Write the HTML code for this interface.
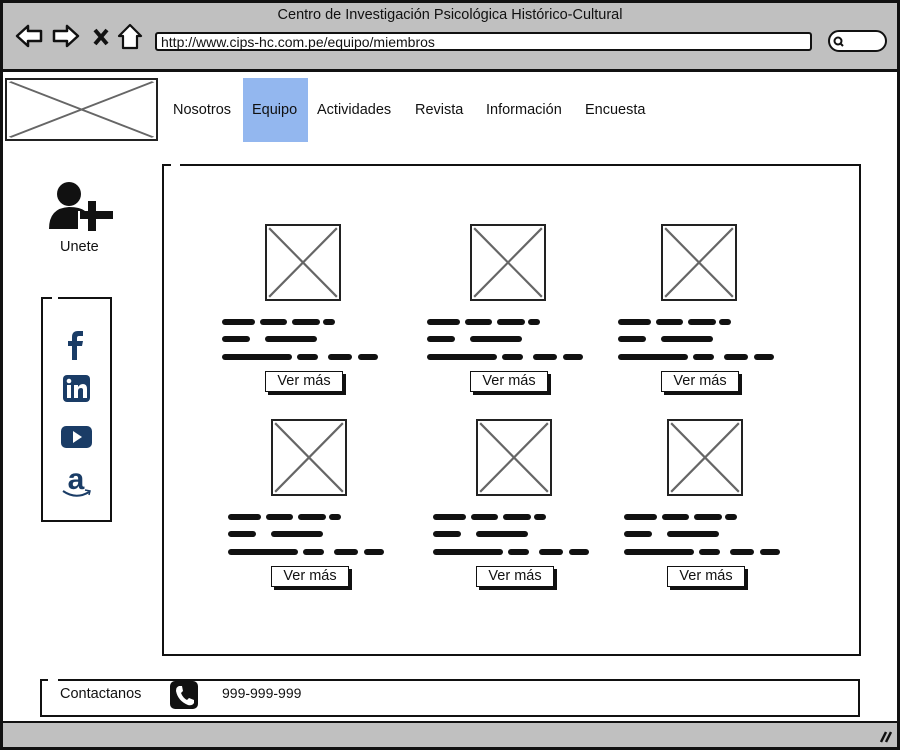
<!DOCTYPE html>
<html><head><meta charset="utf-8"><style>
*{box-sizing:border-box;margin:0;padding:0}
body{width:900px;height:750px;position:relative;background:#fff;font-family:"Liberation Sans",sans-serif;overflow:hidden;color:#000}
.a{position:absolute}
.ph{position:absolute;border:2px solid #222;background:#fff}
.ph svg{position:absolute;left:0;top:0;width:100%;height:100%}
.sq{position:absolute;height:6px;background:#111;border-radius:3px}
.btn{position:absolute;width:78px;height:21px;border:1.5px solid #111;background:#fff;box-shadow:3px 3px 0 #111;font-size:14.5px;text-align:center;line-height:18px;color:#111}
.nav{position:absolute;top:102px;font-size:14.5px;color:#111}
</style></head><body>
<div class="a" style="left:0;top:0;width:900px;height:750px;border:3px solid #111"></div>
<div class="a" style="left:3px;top:3px;width:894px;height:69px;background:#c0c0c0;border-bottom:3px solid #111"></div>
<div class="a" style="left:0;top:7px;width:900px;text-align:center;font-size:14.5px;color:#111">Centro de Investigación Psicológica Histórico-Cultural</div>
<svg class="a" style="left:14px;top:22px" width="130" height="30" viewBox="0 0 130 30">
<path d="M3 14 L14 4 L14 9 L27 9 L27 19 L14 19 L14 24 Z" fill="#fff" stroke="#111" stroke-width="2.5" stroke-linejoin="round"/>
<path d="M64 14 L53 4 L53 9 L40 9 L40 19 L53 19 L53 24 Z" fill="#fff" stroke="#111" stroke-width="2.5" stroke-linejoin="round"/>
<path d="M81 8 L93 22 M93 8 L81 22" stroke="#111" stroke-width="4"/>
<path d="M105 14 L116 3 L127 14 L123 14 L123 26 L109 26 L109 14 Z" fill="#fff" stroke="#111" stroke-width="2.2" stroke-linejoin="round"/>
</svg>
<div class="a" style="left:155px;top:32px;width:657px;height:19px;background:#fff;border:2px solid #111;border-radius:3px;font-size:14px;line-height:17px;padding-left:4px;color:#111">http://www.cips-hc.com.pe/equipo/miembros</div>
<div class="a" style="left:828px;top:30px;width:59px;height:22px;background:#fff;border:2px solid #111;border-radius:11px"></div>
<svg class="a" style="left:833px;top:36px" width="12" height="12"><circle cx="5" cy="5" r="3.5" fill="none" stroke="#111" stroke-width="2"/><path d="M7.5 7.5 L10 10" stroke="#111" stroke-width="2"/></svg>

<div class="ph" style="left:5px;top:78px;width:153px;height:63px;border-width:2px">
<svg viewBox="0 0 100 100" preserveAspectRatio="none"><path d="M2 3 L98 97 M98 3 L2 97" stroke="#666" stroke-width="2.5"/></svg></div>
<div class="a" style="left:243px;top:78px;width:65px;height:64px;background:#93b7ef"></div>
<div class="nav" style="left:173px">Nosotros</div>
<div class="nav" style="left:252px">Equipo</div>
<div class="nav" style="left:317px">Actividades</div>
<div class="nav" style="left:415px">Revista</div>
<div class="nav" style="left:486px">Información</div>
<div class="nav" style="left:585px">Encuesta</div>

<svg class="a" style="left:48px;top:181px" width="66" height="50" viewBox="0 0 66 50">
<circle cx="21" cy="13" r="12" fill="#111"/>
<path d="M1 48 Q1 27 21 26 Q32 26 37 30 L30 30 L30 48 Z" fill="#111"/>
<path d="M40 20 L48 20 L48 30 L65 30 L65 38 L48 38 L48 50 L40 50 L40 38 L32 38 L32 30 L40 30 Z" fill="#111"/>
</svg>
<div class="a" style="left:60px;top:239px;font-size:14.5px;color:#111">Unete</div>

<div class="a" style="left:41px;top:297px;width:71px;height:225px;border:2px solid #111"></div>
<div class="a" style="left:52px;top:294px;width:6px;height:5px;background:#fff"></div>
<svg class="a" style="left:60px;top:330px" width="34" height="170" viewBox="0 0 34 170">
<path d="M12 30 L12 16 L8 16 L8 11 L12 11 L12 7 Q12 1 18 1 L23 1 L23 6 L19 6 Q17 6 17 8 L17 11 L23 11 L22 16 L17 16 L17 30 Z" fill="#1a3c66"/>
<rect x="3" y="45" width="27" height="27" rx="4" fill="#1a3c66"/>
<rect x="7" y="55" width="4" height="13" fill="#fff"/><circle cx="9" cy="51" r="2.3" fill="#fff"/>
<path d="M14 55 L18 55 L18 57 Q20 54 23 54 Q27 54 27 59 L27 68 L23 68 L23 60 Q23 58 21 58 Q18 58 18 61 L18 68 L14 68 Z" fill="#fff"/>
<rect x="1" y="96" width="31" height="22" rx="5" fill="#1a3c66"/>
<path d="M13 101 L22 107 L13 113 Z" fill="#fff"/>
<text x="16" y="159" text-anchor="middle" font-family="Liberation Sans,sans-serif" font-weight="bold" font-size="30" fill="#1a3c66">a</text>
<path d="M3 161 Q16 170 29 162" fill="none" stroke="#1a3c66" stroke-width="2"/>
<path d="M25 160 L30 161 L29 165" fill="none" stroke="#1a3c66" stroke-width="1.5"/>
</svg>

<div class="a" style="left:162px;top:164px;width:699px;height:492px;border:2px solid #111"></div>
<div class="a" style="left:171px;top:162px;width:9px;height:5px;background:#fff"></div>

<div id="cards"></div>

<div class="a" style="left:40px;top:679px;width:820px;height:38px;border:2px solid #111"></div>
<div class="a" style="left:48px;top:677px;width:10px;height:4px;background:#fff"></div>
<div class="a" style="left:60px;top:686px;font-size:14.5px;color:#111">Contactanos</div>
<svg class="a" style="left:170px;top:681px" width="28" height="28" viewBox="0 0 28 28">
<rect x="0" y="0" width="28" height="28" rx="5" fill="#111"/>
<path d="M9 5 L12 5 L13 10 L11 12 Q13 17 17 19 L19 17 L24 19 L24 22 Q22 25 18 24 Q8 20 6 10 Q6 6 9 5 Z" fill="#fff"/>
</svg>
<div class="a" style="left:222px;top:685px;font-size:14px;color:#111">999-999-999</div>

<div class="a" style="left:3px;top:721px;width:894px;height:26px;background:#c0c0c0;border-top:2px solid #111"></div>
<svg class="a" style="left:876px;top:729px" width="16" height="14"><path d="M5 13 L10 3 M10 13 L15 3" stroke="#111" stroke-width="2.5"/></svg>

<script>
var pos=[[224,224],[429,224],[620,224],[230,419],[435,419],[626,419]];
var segs=[[0,-2,33],[0,36,27],[0,68,28],[0,99,12],[17,-2,28],[17,41,52],[35,-2,70],[35,73,21],[35,104,24],[35,134,20]];
var h='';
pos.forEach(function(p){
 var x=p[0],y=p[1];
 h+='<div class="ph" style="left:'+(x+41)+'px;top:'+y+'px;width:76px;height:77px"><svg viewBox="0 0 100 100" preserveAspectRatio="none"><path d="M3 3 L97 97 M97 3 L3 97" stroke="#666" stroke-width="3"/></svg></div>';
 segs.forEach(function(s){h+='<div class="sq" style="left:'+(x+s[1])+'px;top:'+(y+95+s[0])+'px;width:'+s[2]+'px"></div>';});
 h+='<div class="btn" style="left:'+(x+41)+'px;top:'+(y+147)+'px">Ver más</div>';
});
document.getElementById('cards').innerHTML=h;
</script>
</body></html>
